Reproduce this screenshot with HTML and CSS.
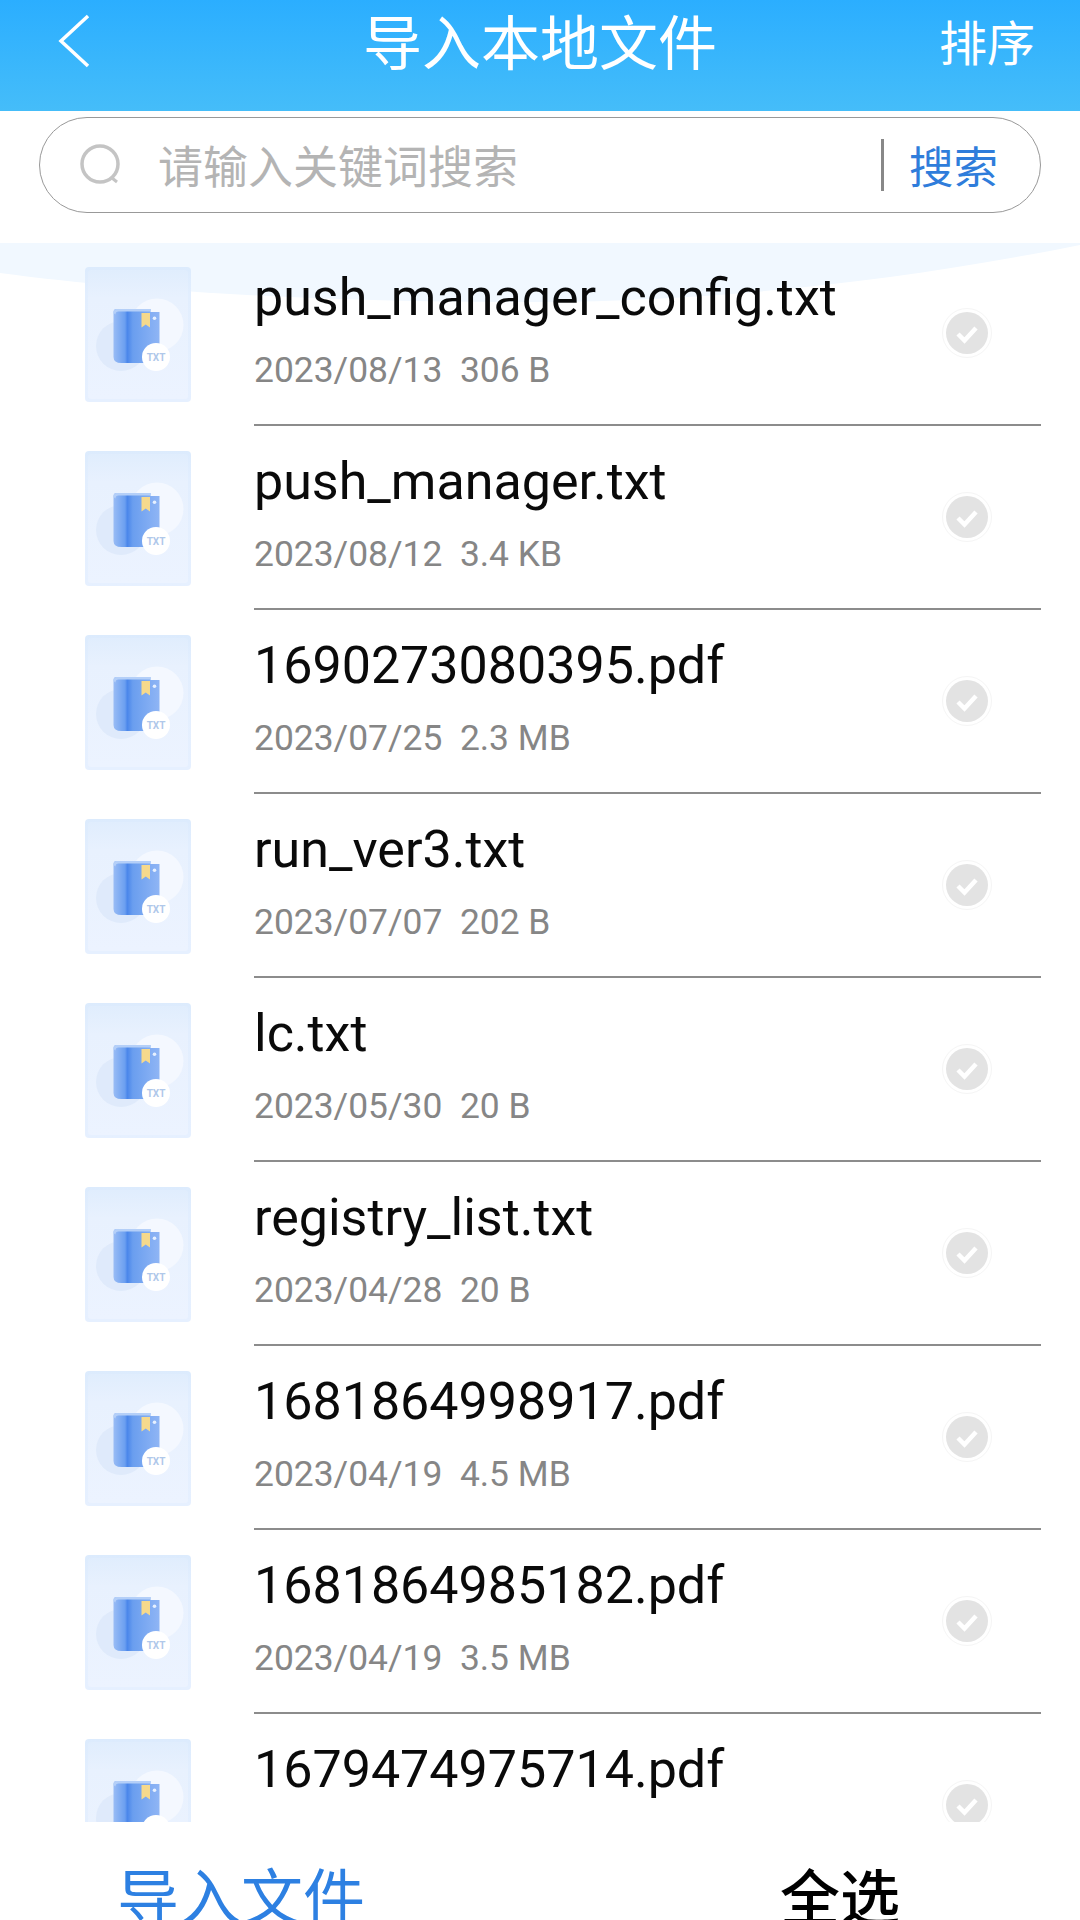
FILE: index.html
```html
<!DOCTYPE html>
<html lang="zh">
<head>
<meta charset="utf-8">
<title>导入本地文件</title>
<link rel="stylesheet" href="styles.css">
</head>
<body>
<svg class="defs" width="0" height="0" aria-hidden="true">
  <defs>
    <linearGradient id="tileG" x1="0" y1="0" x2="0" y2="1">
      <stop offset="0" stop-color="#dcebfd"/><stop offset=".2" stop-color="#e2eefe"/><stop offset="1" stop-color="#e6f0ff"/>
    </linearGradient>
    <linearGradient id="innerG" x1="0" y1="0" x2="0" y2="1">
      <stop offset="0" stop-color="#e0edfd"/><stop offset=".22" stop-color="#e8f1fe"/><stop offset="1" stop-color="#ecf3ff"/>
    </linearGradient>
    <linearGradient id="bookG" x1="0" y1="0" x2="1" y2="0">
      <stop offset="0" stop-color="#99bcf5"/><stop offset=".25" stop-color="#6b9ff0"/><stop offset=".3" stop-color="#4a86ea"/><stop offset=".42" stop-color="#6a9eef"/><stop offset="1" stop-color="#8fb5f5"/>
    </linearGradient>
    <symbol id="fileIcon" viewBox="0 0 106 135">
      <rect x="0" y="0" width="106" height="135" rx="4" fill="url(#tileG)"/>
      <rect x="3" y="3" width="100" height="129" rx="3" fill="url(#innerG)"/>
      <circle cx="36" cy="79" r="25" fill="#dfeafb"/>
      <circle cx="72" cy="58" r="26.500" fill="#f4f8ff"/>
      <path d="M28.500 45q0-3 3-3h34v3h9v51H36.500q-8 0-8-6z" fill="url(#bookG)"/>
      <path d="M28.500 46q0-4 3-4h34v2.500H33.500q-3 0-3 3z" fill="#b4cff8"/>
      <path d="M56.500 46h8.500v14.500l-4.250-3-4.250 3z" fill="#f6d98c"/>
      <circle cx="69.500" cy="51.300" r="1.800" fill="#e6f0ff"/>
      <circle cx="71" cy="90" r="14" fill="#fff"/>
      <text x="71" y="93.600" class="txtBadge" text-anchor="middle">TXT</text>
    </symbol>
    <symbol id="checkIcon" viewBox="0 0 52 52">
      <circle cx="26" cy="26" r="24.500" fill="#fff" stroke="#f5f5f5"/>
      <circle cx="26" cy="26" r="21" fill="#e3e3e3"/>
      <path d="M17 27l6.500 6.500L35 21" fill="none" stroke="#fff" stroke-width="4.500"/>
    </symbol>
  </defs>
</svg>
<div class="page">
  <header class="topbar">
    <svg class="back" width="34" height="54" viewBox="0 0 34 54"><path d="M31 2L4 27l27 25" fill="none" stroke="#fff" stroke-width="3.500"/></svg>
    <h1 class="title">导入本地文件</h1>
    <span class="sort">排序</span>
  </header>
  <div class="searchWrap">
    <div class="search">
      <svg class="searchIcon" width="44" height="44" viewBox="0 0 44 44"><circle cx="21" cy="21" r="18" fill="none" stroke="#c4c4c4" stroke-width="3.500"/><path d="M33 35l5 4" stroke="#c4c4c4" stroke-width="3" fill="none"/></svg>
      <span class="placeholder">请输入关键词搜索</span>
      <span class="sep"></span>
      <span class="searchBtn">搜索</span>
    </div>
  </div>
  <main class="listArea">
    <svg class="wave" width="1080" height="70" viewBox="0 0 1080 70"><path d="M0 0H1080V2C900 38 720 58 540 59C350 60 150 50 0 30z" fill="#f1f8ff"/></svg>
    <ul class="list">
      <li class="row"><svg class="fileIcon"><use href="#fileIcon"/></svg><div class="info"><div class="name">push_manager_config.txt</div><div class="meta">2023/08/13  306 B</div></div><svg class="check"><use href="#checkIcon"/></svg></li>
      <li class="row"><svg class="fileIcon"><use href="#fileIcon"/></svg><div class="info"><div class="name">push_manager.txt</div><div class="meta">2023/08/12  3.4 KB</div></div><svg class="check"><use href="#checkIcon"/></svg></li>
      <li class="row"><svg class="fileIcon"><use href="#fileIcon"/></svg><div class="info"><div class="name">1690273080395.pdf</div><div class="meta">2023/07/25  2.3 MB</div></div><svg class="check"><use href="#checkIcon"/></svg></li>
      <li class="row"><svg class="fileIcon"><use href="#fileIcon"/></svg><div class="info"><div class="name">run_ver3.txt</div><div class="meta">2023/07/07  202 B</div></div><svg class="check"><use href="#checkIcon"/></svg></li>
      <li class="row"><svg class="fileIcon"><use href="#fileIcon"/></svg><div class="info"><div class="name">lc.txt</div><div class="meta">2023/05/30  20 B</div></div><svg class="check"><use href="#checkIcon"/></svg></li>
      <li class="row"><svg class="fileIcon"><use href="#fileIcon"/></svg><div class="info"><div class="name">registry_list.txt</div><div class="meta">2023/04/28  20 B</div></div><svg class="check"><use href="#checkIcon"/></svg></li>
      <li class="row"><svg class="fileIcon"><use href="#fileIcon"/></svg><div class="info"><div class="name">1681864998917.pdf</div><div class="meta">2023/04/19  4.5 MB</div></div><svg class="check"><use href="#checkIcon"/></svg></li>
      <li class="row"><svg class="fileIcon"><use href="#fileIcon"/></svg><div class="info"><div class="name">1681864985182.pdf</div><div class="meta">2023/04/19  3.5 MB</div></div><svg class="check"><use href="#checkIcon"/></svg></li>
      <li class="row"><svg class="fileIcon"><use href="#fileIcon"/></svg><div class="info"><div class="name">1679474975714.pdf</div></div><svg class="check"><use href="#checkIcon"/></svg></li>
    </ul>
  </main>
  <footer class="bottom">
    <span class="import">导入文件</span>
    <span class="all">全选</span>
  </footer>
</div>
</body>
</html>
```
FILE: styles.css
```css
* { box-sizing: border-box; }
html, body { margin: 0; padding: 0; }
body { background: #fff; font-family: Roboto, "Noto Sans CJK SC", sans-serif; overflow: hidden; }
.defs { position: absolute; }
.page { width: 1080px; height: 1920px; display: flex; flex-direction: column; overflow: hidden; }
.topbar { height: 111px; flex: none; display: flex; align-items: flex-start; padding: 14px 45px 0 57px; background: linear-gradient(#2baeff, #45bdf9); color: #fff; font-family: "Noto Sans CJK SC", sans-serif; }
.title { margin: -3px 0 0 272px; font-size: 59px; font-weight: 400; line-height: 58px; white-space: nowrap; }
.sort { margin: -3px 0 0 auto; font-size: 48px; line-height: 58px; }
.searchWrap { flex: none; height: 130px; padding: 6px 39px 0; }
.search { height: 96px; border: 1.500px solid #999; border-radius: 48px; display: flex; align-items: center; padding: 0 42px 0 39px; font-family: "Noto Sans CJK SC", sans-serif; }
.searchIcon { flex: none; }
.placeholder { flex: 1; margin: -2px 0 0 35px; font-size: 45px; color: #b4b4b4; white-space: nowrap; }
.sep { width: 3px; height: 52px; background: #888; margin-right: 25px; }
.searchBtn { margin-top: -2px; font-size: 44.500px; color: #2f7ddb; }
.listArea { position: relative; flex: 1; min-height: 0; overflow: hidden; }
.wave { position: absolute; left: 0; top: 2px; }
.list { position: relative; list-style: none; margin: 0; padding: 0; }
.row { height: 184px; display: flex; padding: 0 39px 0 85px; position: relative; }
.fileIcon { width: 106px; height: 135px; margin-top: 26px; flex: none; }
.txtBadge { font: 700 10px Roboto, sans-serif; fill: #b0c8ea; }
.info { margin-left: 63px; flex: 1; border-bottom: 2px solid #8c8c8c; height: 185px; padding-top: 26px; min-width: 0; }
.name { font-size: 52px; line-height: 62px; color: #0a0a0a; white-space: nowrap; }
.meta { font-size: 35.400px; line-height: 40px; margin-top: 21px; color: #868686; white-space: pre; }
.check { position: absolute; left: 941px; top: 66px; width: 52px; height: 52px; }
.bottom { flex: none; height: 98px; font-family: "Noto Sans CJK SC", sans-serif; display: flex; padding: 32px 0 0 117px; font-size: 62px; line-height: 80px; }
.import { color: #2d80e2; width: 663px; }
.all { color: #000; font-weight: 500; font-size: 60px; }
```
